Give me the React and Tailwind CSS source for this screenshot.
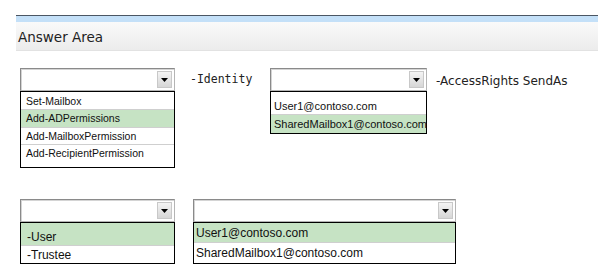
import React from 'react';

const Arrow = () => (
  <div className="absolute right-[2px] top-[2px] bottom-[2px] w-[15px] bg-gradient-to-b from-[#f4f4f4] to-[#d6d6d6] border border-[#c8c8c8] flex items-center justify-center">
    <svg width="7" height="4" viewBox="0 0 7 4">
      <path d="M0 0 L7 0 L3.5 4 Z" fill="#000" />
    </svg>
  </div>
);

const SelectBox = ({ className = '' }) => (
  <div className={`relative h-[23px] bg-white border border-[#b4b4b4] border-t-[#8a8a8a] border-l-[#8a8a8a] shadow-[inset_1px_1px_0_#d4d4d4] ${className}`}>
    <Arrow />
  </div>
);

const Row = ({ children, active, last, className = '' }) => (
  <div
    className={`flex items-center ${active ? 'bg-[#c6e3c4]' : 'bg-white'} ${last ? '' : 'border-b border-[#cfcfcf]'} ${className}`}
  >
    {children}
  </div>
);

const listFont = { fontFamily: '"Liberation Sans", Arial, sans-serif' };

export default function App() {
  return (
    <div className="w-[611px] h-[280px] bg-white overflow-hidden pt-[15px]" style={listFont}>
      {/* header */}
      <div className="ml-[16px] w-[582px]">
        <div className="h-px bg-[#4b5663]" />
        <div className="h-[6px] bg-[#c4e0f8]" />
        <div className="h-[29px] bg-gradient-to-b from-[#fafafa] to-[#ececec] border-b border-[#e2e2e2] flex items-center pl-[2px] pt-[3px]">
          <span className="text-[13.5px] text-[#222]" style={{ fontFamily: '"DejaVu Sans", Verdana, sans-serif' }}>Answer Area</span>
        </div>
      </div>

      {/* first row */}
      <div className="flex items-start pl-[20px] mt-[17px] text-[#111]">
        <div className="w-[155px]">
          <SelectBox />
          <div className="border border-black bg-white text-[10.5px] leading-none h-[77px] pt-px">
            <Row className="h-[17px] pl-[5px]">Set-Mailbox</Row>
            <Row active className="h-[18px] pl-[5px]">Add-ADPermissions</Row>
            <Row className="h-[17px] pl-[5px]">Add-MailboxPermission</Row>
            <Row last className="h-[17px] pl-[5px]">Add-RecipientPermission</Row>
          </div>
        </div>
        <div
          className="w-[95px] pl-[15px] pt-[3px] text-[11.5px] text-[#222]"
          style={{ fontFamily: '"DejaVu Sans Mono", monospace' }}
        >
          -Identity
        </div>
        <div className="w-[157px]">
          <SelectBox />
          <div className="border border-black bg-white text-[11px] leading-none pt-[7px]">
            <Row className="h-[16px] pl-[3px]">User1@contoso.com</Row>
            <Row active last className="h-[18px] pl-[3px]">SharedMailbox1@contoso.com</Row>
          </div>
        </div>
        <div
          className="pl-[9px] pt-[4px] text-[12px] text-[#222]"
          style={{ fontFamily: '"DejaVu Sans", Verdana, sans-serif' }}
        >
          -AccessRights SendAs
        </div>
      </div>

      {/* second row */}
      <div className="flex items-start pl-[20px] mt-[31px] text-[#111]">
        <div className="w-[155px]">
          <SelectBox />
          <div className="border border-black bg-white text-[12px] leading-none">
            <Row active className="h-[23px] items-end pb-[2px] pl-[6px]">-User</Row>
            <Row last className="h-[17px] pl-[6px]">-Trustee</Row>
          </div>
        </div>
        <div className="w-[263px] ml-[18px]">
          <SelectBox />
          <div className="border border-black bg-white text-[12px] leading-none">
            <Row active className="h-[20px] pl-[2px]">User1@contoso.com</Row>
            <Row last className="h-[20px] pl-[2px]">SharedMailbox1@contoso.com</Row>
          </div>
        </div>
      </div>
    </div>
  );
}
